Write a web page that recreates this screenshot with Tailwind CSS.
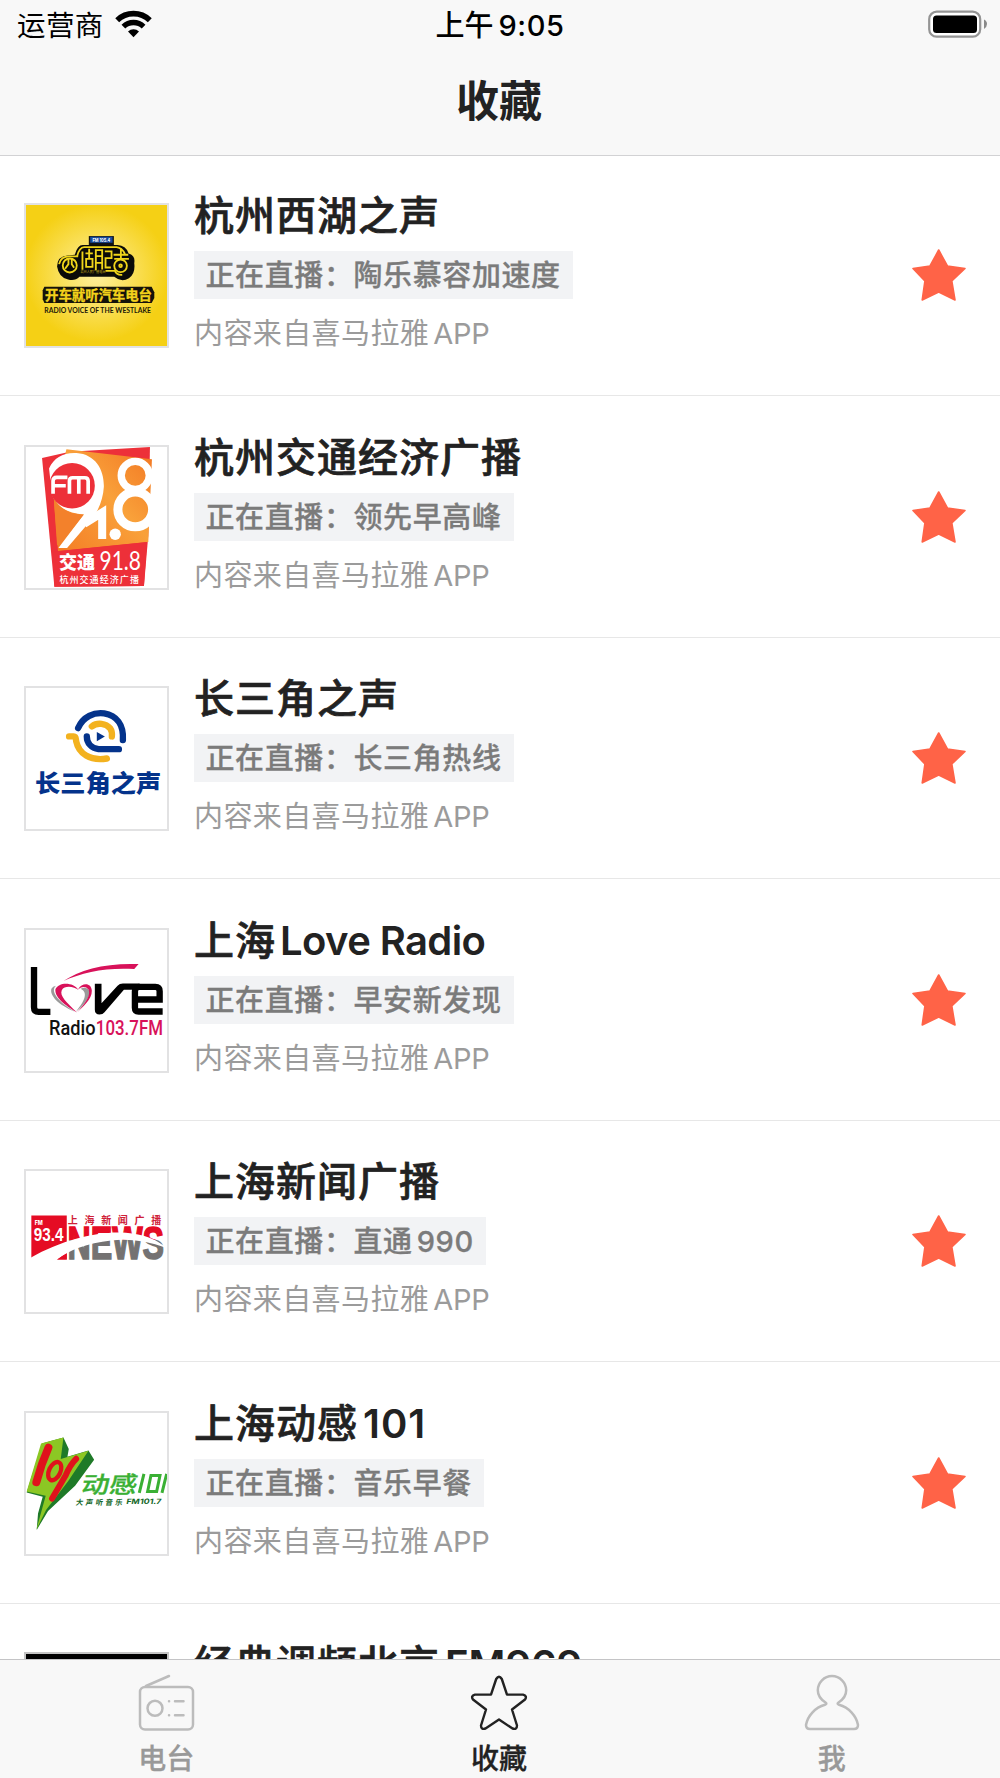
<!DOCTYPE html>
<html lang="zh-CN">
<head>
<meta charset="utf-8">
<title>收藏</title>
<script src="https://cdn.jsdelivr.net/npm/@tailwindcss/browser@4"></script>
</head>
<body class="bg-white font-['Inter','Noto_Sans_CJK_SC',sans-serif]">
<svg class="hidden">
  <symbol id="star" viewBox="0 0 54 52"><path d="M26.7 1 L35.4 17 L53 19.5 L39.8 32 L43 51 L26.7 43 L10.2 51 L12.9 32 L1 19.5 L18 17 Z" fill="#ff6347" stroke="#ff6347" stroke-width="1.6" stroke-linejoin="round"/></symbol>
</svg>
<div class="flex h-[1778px] w-[1000px] flex-col overflow-hidden">
  <header class="h-[155.5px] shrink-0 border-b-[1.5px] border-[#d2d2d4] bg-[#f8f8f8]">
    <div class="grid h-[52px] grid-cols-3 items-center text-[28px] text-black">
      <div class="flex items-center gap-[11px] pl-[17px]">
        <span class="text-[28.5px] tracking-[0.4px]">运营商</span>
        <svg class="h-[28px] w-[37px] -translate-y-[2px]" viewBox="0 0 37 28" fill="none" stroke="#000">
          <path d="M2.2 10.2 A23.5 23.5 0 0 1 34.8 10.2" stroke-width="5.6"/>
          <path d="M8.4 16.6 A14.6 14.6 0 0 1 28.6 16.6" stroke-width="5.4"/>
          <path d="M18.5 27.2 L13 21.5 A8 8 0 0 1 24 21.5 Z" fill="#000" stroke="none"/>
        </svg>
      </div>
      <div class="flex items-center justify-center gap-[5px] font-medium"><span class="text-[29px]">上午</span><span class="text-[29px] tracking-[0.6px]">9:05</span></div>
      <div class="flex justify-end pr-[12px]">
        <svg class="h-[28px] w-[60px] -translate-y-[2px]" viewBox="0 0 60 28">
          <rect x="1.2" y="1.7" width="51" height="25" rx="7.5" fill="#fff" stroke="#949494" stroke-width="2.2"/>
          <rect x="5" y="5.5" width="44" height="17.5" rx="3.5" fill="#000"/>
          <path d="M56 9.5 Q59 11 59 14 Q59 17 56 19 Z" fill="#8a8a8a"/>
        </svg>
      </div>
    </div>
    <h1 class="pt-[19px] pr-[2px] text-center text-[43px] leading-[60px] font-bold text-[#222]">收藏</h1>
  </header>

  <main class="-mt-px min-h-0 flex-1 overflow-hidden text-[#222]">
    <article class="flex h-[241.5px] border-b-[1.5px] border-[#e7e7e7] pr-[34px] pl-6">
      <div class="mt-[48.5px] size-[145px] shrink-0 border-2 border-[#e2e2e3] bg-[#f5d015]">
        <svg class="size-full" viewBox="34 31 422 422">
          <defs><radialGradient id="sun"><stop offset="0" stop-color="#fff0a0"/><stop offset="1" stop-color="#f5d015"/></radialGradient></defs>
          <rect x="34" y="31" width="422" height="422" fill="#f5d015"/>
          <ellipse cx="245" cy="235" rx="215" ry="205" fill="url(#sun)"/>
          <rect x="222" y="124" width="75" height="27" fill="#111"/><rect x="226" y="126" width="67" height="18" fill="#174a9c"/>
          <text x="233" y="141" font-size="16" font-weight="700" fill="#fff" textLength="53" lengthAdjust="spacingAndGlyphs">FM 105.4</text>
          <path d="M127 215 Q128 184 158 182 L180 180 Q188 151 204 151 H308 Q333 152 341 176 Q362 182 358 205 Q362 238 342 250 Q320 264 298 246 H194 Q180 260 160 254 Q132 248 127 215Z" fill="#0b0b08"/>
          <g fill="none" stroke="#f0d51a" stroke-width="5.5">
            <circle cx="165" cy="212" r="21"/><path d="M133 208 Q138 185 164 185 H190 M161 190 V208 L151 222 M171 190 V208 L178 219"/>
            <path d="M187 185 Q193 158 208 157 H305 Q322 160 330 177 M203 170 V225 M212 176 H234 M223 162 V192 M214 192 H233 V216 H214 Z M243 226 V166 H262 V224 M243 184 H262 M243 204 H262 M270 170 H290 V190 H272 V218 H288 M296 180 H340 M318 160 V192 M298 192 H342"/>
            <circle cx="317" cy="213" r="19"/><circle cx="317" cy="213" r="4"/><path d="M272 228 H300 Q304 241 322 240"/>
          </g>
          <text x="197" y="236" font-size="11" fill="#c4a91b" textLength="75" lengthAdjust="spacingAndGlyphs">杭州人民广播电台</text>
          <path d="M89 276 H410 L418 292 V309 L410 324 H89 L84 313 V286Z" fill="#15130a"/>
          <text x="91" y="314" font-size="40" font-weight="700" fill="#f3d21b" stroke="#f3d21b" textLength="320" lengthAdjust="spacingAndGlyphs">开车就听汽车电台</text>
          <text x="89" y="354" font-size="24" font-weight="700" fill="#1d1907" font-family="Lato" textLength="319" lengthAdjust="spacingAndGlyphs">RADIO VOICE OF THE WESTLAKE</text>
        </svg>
      </div>
      <div class="ml-[25px] flex flex-1 flex-col items-start pt-[32.5px]">
        <h2 class="text-[40px] leading-[58px] font-medium tracking-[1px] [-webkit-text-stroke:0.7px]">杭州西湖之声</h2>
        <p class="mt-[6px] h-[48px] bg-[#f2f3f5] pr-[12.5px] pl-[11.5px] text-[29px] leading-[50px] font-medium tracking-[0.6px] text-[#7b7b7b] [-webkit-text-stroke:0.3px]">正在直播：陶乐慕容加速度</p>
        <p class="mt-[14px] flex gap-[4px] text-[29px] leading-[42px] tracking-[0.4px] text-[#9b9b9b]">内容来自喜马拉雅<span class="tracking-[-0.3px]">APP</span></p>
      </div>
      <svg class="mt-[94.5px] h-[52px] w-[54px]"><use href="#star"/></svg>
    </article>

    <article class="flex h-[241.5px] border-b-[1.5px] border-[#e7e7e7] pr-[34px] pl-6">
      <div class="mt-[48.5px] size-[145px] shrink-0 border-2 border-[#e2e2e3]">
        <svg class="size-full" viewBox="34 36 422 422">
          <defs><linearGradient id="orange" x1="0" x2="1" y1="1" y2="0"><stop offset="0" stop-color="#f47c25"/><stop offset=".55" stop-color="#f9a13a"/><stop offset="1" stop-color="#f27723"/></linearGradient></defs>
          <path d="M82 69 L165 50 L405 36 L400 300 L387 452 L119 454Z" fill="#ed3039"/>
          <path d="M155 43 L411 73 L400 320 L130 348 L118 200Z" fill="url(#orange)"/>
          <path d="M103 100 C118 68 145 52 185 54 C243 58 268 105 267 155 C264 200 246 240 214 272 L157 338 H131 L207 238 C160 236 125 215 112 180Z" fill="#fff"/>
          <path d="M117 188 C135 222 165 238 207 238 L134 330 L127 330Z" fill="#f3812b"/>
          <circle cx="172" cy="152" r="68" fill="#ed3039"/>
          <g fill="none" stroke="#fff">
            <circle cx="361" cy="121" r="42" stroke-width="22"/><circle cx="361" cy="223" r="52" stroke-width="27"/>
            <path d="M208 266 L262 232 V311" stroke-width="24"/>
          </g>
          <path d="M115 176 V138 Q115 127 126 127 H158 M115 152 H153 M164 176 V137 Q164 128 174 128 H210 Q220 128 220 138 V176 M192 129 V176" fill="none" stroke="#fff" stroke-width="11"/>
          <circle cx="301" cy="297" r="17" fill="#fff"/>
          <path d="M116 349 L396 320 L387 452 L119 454Z" fill="#ed3039"/>
          <text x="133" y="401" font-size="56" font-weight="900" fill="#fff" textLength="108" lengthAdjust="spacingAndGlyphs">交通</text>
          <text x="254" y="405" font-size="78" fill="#fff" font-family="Lato" textLength="124" lengthAdjust="spacingAndGlyphs">91.8</text>
          <text x="134" y="442" font-size="27" font-weight="500" fill="#fff" textLength="238">杭州交通经济广播</text>
        </svg>
      </div>
      <div class="ml-[25px] flex flex-1 flex-col items-start pt-[32.5px]">
        <h2 class="text-[40px] leading-[58px] font-medium tracking-[1px] [-webkit-text-stroke:0.7px]">杭州交通经济广播</h2>
        <p class="mt-[6px] h-[48px] bg-[#f2f3f5] pr-[12.5px] pl-[11.5px] text-[29px] leading-[50px] font-medium tracking-[0.6px] text-[#7b7b7b] [-webkit-text-stroke:0.3px]">正在直播：领先早高峰</p>
        <p class="mt-[14px] flex gap-[4px] text-[29px] leading-[42px] tracking-[0.4px] text-[#9b9b9b]">内容来自喜马拉雅<span class="tracking-[-0.3px]">APP</span></p>
      </div>
      <svg class="mt-[94.5px] h-[52px] w-[54px]"><use href="#star"/></svg>
    </article>

    <article class="flex h-[241.5px] border-b-[1.5px] border-[#e7e7e7] pr-[34px] pl-6">
      <div class="mt-[48.5px] size-[145px] shrink-0 border-2 border-[#e2e2e3]">
        <svg class="size-full" viewBox="34 42 422 422">
          <g fill="none" stroke-width="19" stroke-linecap="round">
            <path d="M190 162 C205 127 238 114 268 118 C304 124 327 151 324 198" stroke="#04338b"/>
            <path d="M231 157 C248 144 273 148 286 163 C291 170 292 177 291 187" stroke="#f3b21f"/>
            <path d="M163 187 H177 C184 187 183 194 184 201 C192 239 225 261 276 253" stroke="#f3b21f"/>
            <path d="M216 187 C216 207 230 222 251 225 H312" stroke="#04338b"/>
          </g>
          <path d="M246 174 L270 187 L246 201Z" fill="#04338b"/>
          <text x="61" y="352" font-size="72" font-weight="900" fill="#04338b" textLength="378" lengthAdjust="spacingAndGlyphs">长三角之声</text>
        </svg>
      </div>
      <div class="ml-[25px] flex flex-1 flex-col items-start pt-[32.5px]">
        <h2 class="text-[40px] leading-[58px] font-medium tracking-[1px] [-webkit-text-stroke:0.7px]">长三角之声</h2>
        <p class="mt-[6px] h-[48px] bg-[#f2f3f5] pr-[12.5px] pl-[11.5px] text-[29px] leading-[50px] font-medium tracking-[0.6px] text-[#7b7b7b] [-webkit-text-stroke:0.3px]">正在直播：长三角热线</p>
        <p class="mt-[14px] flex gap-[4px] text-[29px] leading-[42px] tracking-[0.4px] text-[#9b9b9b]">内容来自喜马拉雅<span class="tracking-[-0.3px]">APP</span></p>
      </div>
      <svg class="mt-[94.5px] h-[52px] w-[54px]"><use href="#star"/></svg>
    </article>

    <article class="flex h-[241.5px] border-b-[1.5px] border-[#e7e7e7] pr-[34px] pl-6">
      <div class="mt-[48.5px] size-[145px] shrink-0 border-2 border-[#e2e2e3]">
        <svg class="size-full" viewBox="34 31 422 422">
          <g fill="none" stroke="#000" stroke-width="19">
            <path d="M58 142 V262 Q58 276 72 276 H107"/>
            <path d="M443 275 H371 Q360 275 360 264 V214 Q360 201 373 201 H421 Q434 201 434 214 V239 H360"/>
          </g>
          <path d="M240 192 H260 V250 L308 198 Q314 191 324 191 H374 V210 H327 L269 277 Q264 284 254 284 Q240 284 240 270Z" fill="#000"/>
          <path d="M146 184 C195 149 276 129 371 133 L358 148 C276 143 204 157 146 184Z" fill="#d8125a"/>
          <path d="M124 198 C106 212 126 244 181 276 C132 256 104 228 110 207 Q114 199 124 198Z M197 207 C218 198 228 212 222 228 C215 247 199 264 184 275 C210 243 221 218 197 207Z" fill="#9a9a9a"/>
          <path d="M192 211 C174 184 131 187 122 208 C119 236 161 262 187 278 C155 247 134 228 141 211 C149 196 177 199 192 211Z M190 208 C201 188 230 187 231 213 C232 239 203 262 187 278 C211 250 229 226 221 209 Q209 195 190 208Z" fill="#d8125a"/>
          <text x="103" y="346" font-size="60" font-weight="500" fill="#111" font-family="Roboto" textLength="139" lengthAdjust="spacingAndGlyphs">Radio</text>
          <text x="243" y="346" font-size="60" font-weight="500" fill="#d8125a" font-family="Roboto" textLength="201" lengthAdjust="spacingAndGlyphs">103.7FM</text>
        </svg>
      </div>
      <div class="ml-[25px] flex flex-1 flex-col items-start pt-[32.5px]">
        <h2 class="flex gap-[4px] text-[40px] leading-[58px] font-medium tracking-[1px] [-webkit-text-stroke:0.7px]">上海<span class="font-semibold tracking-[-0.6px] [-webkit-text-stroke:0px]">Love Radio</span></h2>
        <p class="mt-[6px] h-[48px] bg-[#f2f3f5] pr-[12.5px] pl-[11.5px] text-[29px] leading-[50px] font-medium tracking-[0.6px] text-[#7b7b7b] [-webkit-text-stroke:0.3px]">正在直播：早安新发现</p>
        <p class="mt-[14px] flex gap-[4px] text-[29px] leading-[42px] tracking-[0.4px] text-[#9b9b9b]">内容来自喜马拉雅<span class="tracking-[-0.3px]">APP</span></p>
      </div>
      <svg class="mt-[94.5px] h-[52px] w-[54px]"><use href="#star"/></svg>
    </article>

    <article class="flex h-[241.5px] border-b-[1.5px] border-[#e7e7e7] pr-[34px] pl-6">
      <div class="mt-[48.5px] size-[145px] shrink-0 border-2 border-[#e2e2e3]">
        <svg class="size-full" viewBox="34 34 422 422">
          <defs><linearGradient id="news" gradientUnits="userSpaceOnUse" x1="0" x2="0" y1="200" y2="300"><stop offset=".42" stop-color="#e50c24"/><stop offset=".42" stop-color="#747272"/></linearGradient></defs>
          <path d="M50 167 H156 V299 H50Z" fill="#e50c24"/>
          <text x="60" y="195" font-size="19" font-weight="800" fill="#fff" textLength="24" lengthAdjust="spacingAndGlyphs">FM</text>
          <text x="57" y="244" font-size="56" font-weight="700" fill="#fff" font-family="Liberation Sans" textLength="89" lengthAdjust="spacingAndGlyphs">93.4</text>
          <text x="159" y="192" font-size="30" font-weight="700" fill="#cf2038" textLength="280">上海新闻广播</text>
          <text x="158" y="298" font-family="Liberation Sans" font-size="136" font-weight="700" stroke-width="5" fill="url(#news)" stroke="url(#news)" textLength="289" lengthAdjust="spacingAndGlyphs">NEWS</text>
          <path d="M385 240 H456 V262 Q420 248 385 240Z" fill="#e50c24" opacity="0"/>
          <path d="M48 294 C145 237 259 213 333 219 Q410 225 453 264 C398 244 343 236 289 242 C216 250 164 270 126 300 H48Z" fill="#fff"/>
          <path d="M127 299 L156 281 V299Z" fill="#e50c24"/>
        </svg>
      </div>
      <div class="ml-[25px] flex flex-1 flex-col items-start pt-[32.5px]">
        <h2 class="text-[40px] leading-[58px] font-medium tracking-[1px] [-webkit-text-stroke:0.7px]">上海新闻广播</h2>
        <p class="mt-[6px] flex h-[48px] gap-[4px] bg-[#f2f3f5] pr-[12.5px] pl-[11.5px] text-[29px] leading-[50px] font-medium tracking-[0.6px] text-[#7b7b7b] [-webkit-text-stroke:0.3px]">正在直播：直通<span>990</span></p>
        <p class="mt-[14px] flex gap-[4px] text-[29px] leading-[42px] tracking-[0.4px] text-[#9b9b9b]">内容来自喜马拉雅<span class="tracking-[-0.3px]">APP</span></p>
      </div>
      <svg class="mt-[94.5px] h-[52px] w-[54px]"><use href="#star"/></svg>
    </article>

    <article class="flex h-[241.5px] border-b-[1.5px] border-[#e7e7e7] pr-[34px] pl-6">
      <div class="mt-[48.5px] size-[145px] shrink-0 border-2 border-[#e2e2e3]">
        <svg class="size-full" viewBox="34 39 422 422">
          <path d="M146 112 L162 147 L158 170 L221 151 L238 179 L181 257 L100 332 L66 389 L70 340 L84 290 L36 277 L82 130Z" fill="#1f7a28"/>
          <path d="M79 130 L146 112 L138 177 L221 152 L160 243 L94 329 L65 388 L93 287 L36 274Z" fill="#8cc724"/>
          <g fill="none" stroke="#e0121c" stroke-linecap="round">
            <path d="M101 143 Q79 193 65 246" stroke-width="24"/>
            <path d="M184 176 Q165 195 153 225 L112 295" stroke-width="18"/>
            <ellipse cx="120" cy="213" rx="17" ry="29" stroke-width="13" transform="rotate(25 120 213)"/>
          </g>
          <g fill="#3ab034" font-weight="500">
            <text transform="translate(197 278) skewX(-10)" font-size="70" textLength="166" lengthAdjust="spacingAndGlyphs" stroke="#3ab034">动感</text>
            <path d="M373 278 L387 221 M398 274 L408 226 H435 L425 274Z M441 278 L455 221" fill="none" stroke="#3ab034" stroke-width="9"/>
          </g>
          <g fill="#16682a" font-weight="700" font-size="22">
            <text transform="translate(182 313) skewX(-10)" textLength="140">大声听音乐</text>
            <text transform="translate(333 311) skewX(-10)" textLength="105" lengthAdjust="spacingAndGlyphs">FM101.7</text>
          </g>
        </svg>
      </div>
      <div class="ml-[25px] flex flex-1 flex-col items-start pt-[32.5px]">
        <h2 class="flex gap-[5px] text-[40px] leading-[58px] font-medium tracking-[1px] [-webkit-text-stroke:0.7px]">上海动感<span class="font-semibold tracking-[1px] [-webkit-text-stroke:0px]">101</span></h2>
        <p class="mt-[6px] h-[48px] bg-[#f2f3f5] pr-[12.5px] pl-[11.5px] text-[29px] leading-[50px] font-medium tracking-[0.6px] text-[#7b7b7b] [-webkit-text-stroke:0.3px]">正在直播：音乐早餐</p>
        <p class="mt-[14px] flex gap-[4px] text-[29px] leading-[42px] tracking-[0.4px] text-[#9b9b9b]">内容来自喜马拉雅<span class="tracking-[-0.3px]">APP</span></p>
      </div>
      <svg class="mt-[94.5px] h-[52px] w-[54px]"><use href="#star"/></svg>
    </article>

    <article class="flex h-[241.5px] pr-[34px] pl-6">
      <div class="mt-[48.5px] size-[145px] shrink-0 border-2 border-[#c4c4c4] bg-black"></div>
      <div class="ml-[25px] pt-[32.5px]">
        <h2 class="flex gap-[5px] text-[40px] leading-[58px] font-medium tracking-[1px] [-webkit-text-stroke:0.7px]">经典调频北京<span class="font-semibold tracking-[0px] [-webkit-text-stroke:0px]">FM969</span></h2>
      </div>
    </article>
  </main>

  <nav class="grid h-[119px] shrink-0 grid-cols-3 border-t-[1.5px] border-[#c4c4c6] bg-[#f8f8f8] pr-[2px] text-[28px] leading-[40px] font-medium text-[#999]">
    <div class="flex flex-col items-center pt-[14px]">
      <svg class="h-[58px] w-[58px]" viewBox="137 1674 58 58" fill="none" stroke="#bcbcbc" stroke-width="2.5" stroke-linecap="round">
        <rect x="140" y="1687" width="53" height="42.5" rx="5"/><path d="M146 1686 L169 1676"/>
        <circle cx="155" cy="1708.3" r="7.5"/><path d="M169 1701.3 h.1 M169 1715.3 h.1 M175 1701.3 h8.5 M175 1715.3 h8.5"/>
      </svg>
      <span class="mt-[7px] [-webkit-text-stroke:0.3px]">电台</span>
    </div>
    <div class="flex flex-col items-center pt-[14px] text-[#222]">
      <svg class="h-[58px] w-[58px]" viewBox="471 1674 58 58" fill="none" stroke="#222" stroke-width="2.4" stroke-linejoin="round">
        <path d="M497.200 1679 Q500 1674.500 502.800 1679 L508 1694.600 H524 Q528.500 1696 526 1699.500 L513 1709.500 L518 1725.500 Q518 1730 513.500 1728.500 L500 1719.500 L486.500 1728.500 Q482 1730 482 1725.500 L487 1709.500 L474 1699.500 Q471.500 1696 476 1694.600 H492Z"/>
      </svg>
      <span class="mt-[7px] [-webkit-text-stroke:0.3px]">收藏</span>
    </div>
    <div class="flex flex-col items-center pt-[14px]">
      <svg class="h-[58px] w-[58px]" viewBox="804 1674 58 58" fill="none" stroke="#bcbcbc" stroke-width="2.5" stroke-linejoin="round">
        <path d="M826.500 1702.500 C821 1699 818.800 1695 818.800 1690.300 A14.200 14.200 0 0 1 847.200 1690.300 C847.200 1695 845 1699 839.500 1702.500 Q837.500 1704 840 1704.800 C850 1707.500 857.500 1716 859 1725 Q859 1729 855 1729 H811 Q807 1729 807 1725 C808.500 1716 816 1707.500 826 1704.800 Q828.500 1704 826.500 1702.500Z"/>
      </svg>
      <span class="mt-[7px] [-webkit-text-stroke:0.3px]">我</span>
    </div>
  </nav>
</div>
</body>
</html>
